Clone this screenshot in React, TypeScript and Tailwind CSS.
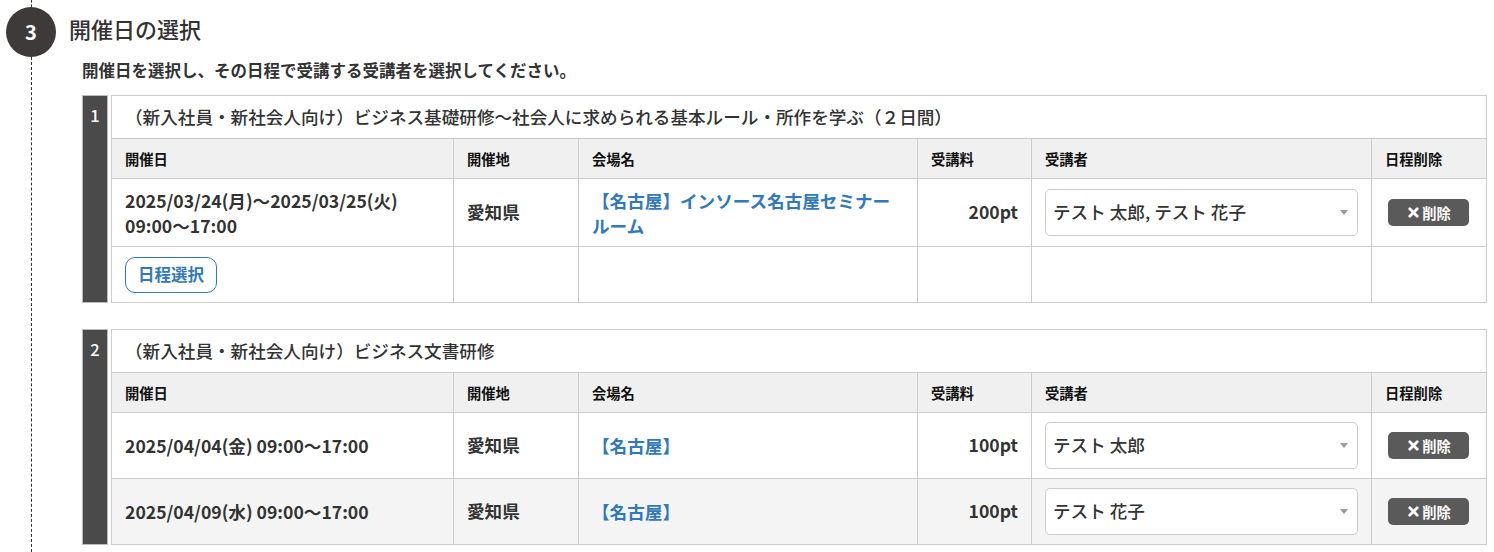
import { X } from "lucide-react";

type Row = {
  date: string[];
  place: string;
  venue: string[];
  fee: string;
  members: string;
};

type Course = {
  no: number;
  title: string;
  rows: Row[];
  pickButton?: boolean;
};

const courses: Course[] = [
  {
    no: 1,
    title: "（新入社員・新社会人向け）ビジネス基礎研修～社会人に求められる基本ルール・所作を学ぶ（２日間）",
    pickButton: true,
    rows: [
      {
        date: ["2025/03/24(月)～2025/03/25(火)", "09:00～17:00"],
        place: "愛知県",
        venue: ["【名古屋】インソース名古屋セミナー", "ルーム"],
        fee: "200pt",
        members: "テスト 太郎, テスト 花子",
      },
    ],
  },
  {
    no: 2,
    title: "（新入社員・新社会人向け）ビジネス文書研修",
    rows: [
      {
        date: ["2025/04/04(金) 09:00～17:00"],
        place: "愛知県",
        venue: ["【名古屋】"],
        fee: "100pt",
        members: "テスト 太郎",
      },
      {
        date: ["2025/04/09(水) 09:00～17:00"],
        place: "愛知県",
        venue: ["【名古屋】"],
        fee: "100pt",
        members: "テスト 花子",
      },
    ],
  },
];

const font = { fontFamily: '"Noto Sans CJK JP", "Noto Sans", sans-serif' };

function MemberSelect({ value }: { value: string }) {
  return (
    <div className="flex h-[47px] w-[313px] items-center justify-between rounded-[5px] border border-[#cccccc] bg-white pl-[7px] pr-[9px]">
      <span className="text-[17.6px] font-medium text-[#333]">{value}</span>
      <svg width="8" height="5" viewBox="0 0 8 5">
        <path d="M0 0h8L4 5z" fill="#999" />
      </svg>
    </div>
  );
}

function DeleteButton() {
  return (
    <button className="flex h-[27px] w-[81px] items-center justify-center gap-[1px] rounded-[5px] bg-[#5a5a5a] text-[14.3px] font-bold text-white">
      <X className="h-[15px] w-[15px]" strokeWidth={4.5} />
      削除
    </button>
  );
}

function CourseBlock({ course }: { course: Course }) {
  const cell = "border border-[#cccccc] px-[13px] align-middle";
  return (
    <div className="flex">
      <div className="w-[26px] shrink-0 border border-[#bcbcbc] bg-[#4a4a4a] pt-[7px] text-center text-[16.5px] font-medium text-white">
        {course.no}
      </div>
      <table className="ml-[3px] w-[1375px] table-fixed border-collapse text-[#333]">
        <colgroup>
          <col className="w-[342px]" />
          <col className="w-[125px]" />
          <col className="w-[339px]" />
          <col className="w-[114px]" />
          <col className="w-[340px]" />
          <col className="w-[115px]" />
        </colgroup>
        <tbody>
          <tr className="h-[43px]">
            <td colSpan={6} className={`${cell} text-[17.6px] font-medium`}>
              {course.title}
            </td>
          </tr>
          <tr className="h-[40px] bg-[#f0f0f0] text-[14.3px] font-bold text-[#111]">
            <td className={cell}>開催日</td>
            <td className={cell}>開催地</td>
            <td className={cell}>会場名</td>
            <td className={cell}>受講料</td>
            <td className={cell}>受講者</td>
            <td className={cell}>日程削除</td>
          </tr>
          {course.rows.map((r, i) => (
            <tr
              key={i}
              className={`${course.rows.length === 1 ? "h-[68px]" : "h-[66px]"} ${i % 2 === 1 ? "bg-[#f4f4f4]" : "bg-white"} text-[17.6px] font-semibold`}
            >
              <td className={`${cell} leading-[25px]`}>
                {r.date.map((d) => (
                  <div key={d}>{d}</div>
                ))}
              </td>
              <td className={cell}>{r.place}</td>
              <td className={`${cell} leading-[25px] text-[#3079bd]`}>
                {r.venue.map((v) => (
                  <div key={v}>{v}</div>
                ))}
              </td>
              <td className={`${cell} text-right`}>{r.fee}</td>
              <td className={cell}>
                <MemberSelect value={r.members} />
              </td>
              <td className={`${cell} pl-[16px]`}>
                <DeleteButton />
              </td>
            </tr>
          ))}
          {course.pickButton && (
            <tr className="h-[56px]">
              <td className={cell}>
                <button className="h-[36px] rounded-[10px] border border-[#3079bd] px-[12px] text-[16.5px] font-semibold text-[#3079bd]">
                  日程選択
                </button>
              </td>
              <td className={cell}></td>
              <td className={cell}></td>
              <td className={cell}></td>
              <td className={cell}></td>
              <td className={cell}></td>
            </tr>
          )}
        </tbody>
      </table>
    </div>
  );
}

export default function App() {
  return (
    <div className="flex min-h-[552px] bg-white" style={font}>
      {/* step marker */}
      <div className="flex w-[62px] shrink-0 flex-col items-center">
        <div className="h-[7px] w-0 border-l border-dashed border-[#333]" />
        <div className="flex h-[50px] w-[50px] items-center justify-center rounded-full bg-[#3e3a39] text-[20px] font-bold text-white">
          3
        </div>
        <div className="w-0 flex-1 border-l border-dashed border-[#333]" />
      </div>

      <div className="ml-[7px] flex-1 pr-[8px]">
        <h2 className="mt-[13px] h-[30px] text-[22px] font-medium leading-[30px] text-[#333]">
          開催日の選択
        </h2>
        <p className="mt-[16px] h-[22px] pl-[13px] text-[16.5px] font-semibold leading-[22px] text-[#333]">
          開催日を選択し、その日程で受講する受講者を選択してください。
        </p>
        <div className="mt-[14px] flex flex-col gap-[26px] pl-[13px]">
          {courses.map((c) => (
            <CourseBlock key={c.no} course={c} />
          ))}
        </div>
      </div>
    </div>
  );
}
